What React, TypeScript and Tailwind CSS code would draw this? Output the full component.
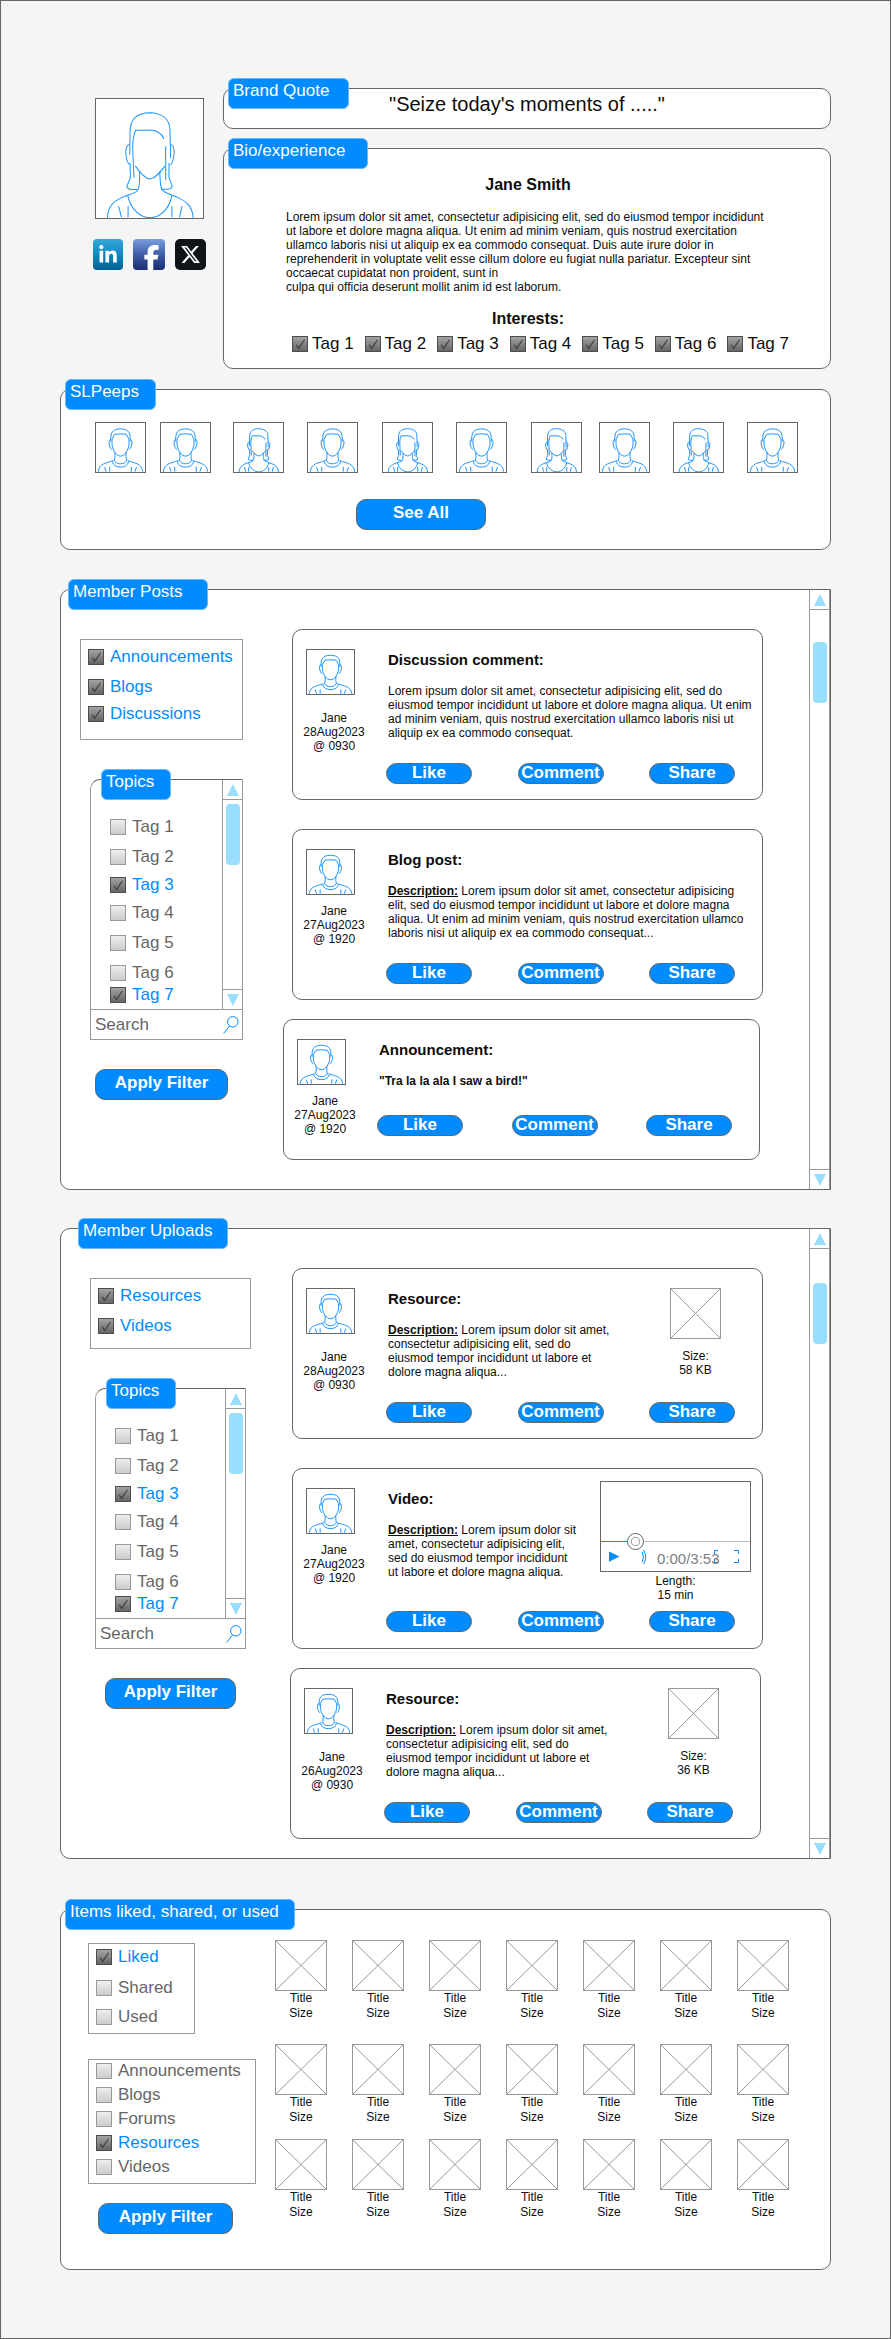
import type { ReactNode } from "react";
import { FaFacebookF, FaLinkedinIn, FaXTwitter } from "react-icons/fa6";

function Tab({ children, className }: { children: ReactNode; className: string }) {
  return (
    <h2
      className={`absolute -top-[11px] z-10 h-[31px] whitespace-nowrap rounded-[6px] border border-[#66b8ff] bg-[#008cff] pt-[2px] pl-[4px] text-[17px] leading-[20px] text-white ${className}`}
    >
      {children}
    </h2>
  );
}

function Check({
  label,
  checked = false,
  tone = "text-[#008cff]",
  gap = "gap-[6px]",
  className = "",
}: {
  label: string;
  checked?: boolean;
  tone?: string;
  gap?: string;
  className?: string;
}) {
  return (
    <label
      className={`flex h-[16px] items-center whitespace-nowrap text-[17px] leading-[16px] ${gap} ${
        checked ? tone : "text-[#666666]"
      } ${className}`}
    >
      <span className="grid size-[16px] shrink-0">
        <input
          type="checkbox"
          defaultChecked={checked}
          className="peer col-start-1 row-start-1 size-[16px] appearance-none border border-[#999999] bg-linear-to-b from-[#eeeeee] to-[#cccccc] checked:border-[#4d4d4d] checked:from-[#a3a3a3] checked:to-[#666666]"
        />
        <svg
          viewBox="0 0 16 16"
          className="pointer-events-none invisible col-start-1 row-start-1 size-[16px] peer-checked:visible"
          fill="none"
          stroke="#3d3d3d"
          strokeWidth="1.1"
        >
          <path d="M4.2 8.8 L6.6 12.4 L12.6 3.8" />
        </svg>
      </span>
      {label}
    </label>
  );
}

function PrimaryButton({ children, className }: { children: ReactNode; className: string }) {
  return (
    <button
      type="button"
      className={`block rounded-[10px] border border-[#666666] bg-[#008cff] pt-[3px] pb-[6px] text-center text-[17px] leading-[20px] font-bold text-white ${className}`}
    >
      {children}
    </button>
  );
}

function Man() {
  return (
    <svg
      viewBox="0 0 150 151"
      preserveAspectRatio="none"
      className="block size-full"
      fill="none"
      stroke="#1a94ff"
      strokeWidth="1"
    >
      <path vectorEffect="non-scaling-stroke" d="M45 57 C44 32 48 19 75 18 C102 19 106 32 105 57" />
      <path vectorEffect="non-scaling-stroke" d="M49 66 V50 L57 35 Q75 32 93 35 L101 50 V66" />
      <path vectorEffect="non-scaling-stroke" d="M46 50 C37 50 38 72 48 82 M104 50 C113 50 112 72 102 82" />
      <path vectorEffect="non-scaling-stroke" d="M49 66 C52 86 62 102 75 102 C88 102 98 86 101 66" />
      <path vectorEffect="non-scaling-stroke" d="M58 90 C58 104 59 112 54 116 M92 90 C92 104 91 112 96 116" />
      <path vectorEffect="non-scaling-stroke" d="M56 113 C58 130 92 130 94 113" />
      <path vectorEffect="non-scaling-stroke" d="M50 118 C52 142 98 142 100 118" />
      <path vectorEffect="non-scaling-stroke" d="M7 150 C10 124 32 124 52 116 M143 150 C140 124 118 124 98 116" />
      <path vectorEffect="non-scaling-stroke" d="M26 136 L31 150 M42 135 V150 M108 135 V150 M124 136 L119 150" />
    </svg>
  );
}

function Woman() {
  return (
    <svg
      viewBox="0 0 327 363"
      preserveAspectRatio="none"
      className="block size-full"
      fill="none"
      stroke="#1a94ff"
      strokeWidth="1"
    >
      <path vectorEffect="non-scaling-stroke" d="M103 170 L104 102 C104 55 130 43 164 42 C198 43 224 58 226 92 L228 180" />
      <path vectorEffect="non-scaling-stroke" d="M116 240 L112 150 C112 125 115 110 121 95 H160 C185 94 200 105 208 122" />
      <path vectorEffect="non-scaling-stroke" d="M213 144 V248" />
      <path vectorEffect="non-scaling-stroke" d="M103 139 C92 140 88 160 93 180 C95 190 98 196 102 200 M227 139 C238 140 242 160 237 180 C235 190 232 196 228 202" />
      <path vectorEffect="non-scaling-stroke" d="M104 195 L105 240 L94 267 Q98 276 108 276 H128 M223 195 V240 L233 266 Q230 275 220 275 H198" />
      <path vectorEffect="non-scaling-stroke" d="M120 204 C135 225 150 244 165 244 C180 244 195 225 211 204" />
      <path vectorEffect="non-scaling-stroke" d="M133 222 C134 250 134 272 126 280 C118 290 100 290 80 300 C55 312 36 325 35 363" />
      <path vectorEffect="non-scaling-stroke" d="M195 222 C196 260 197 275 208 282 C225 292 240 295 255 303 C280 315 295 330 297 363" />
      <path vectorEffect="non-scaling-stroke" d="M97 294 C105 335 135 362 165 362 C195 362 225 335 232 294" />
      <path vectorEffect="non-scaling-stroke" d="M69 327 L78 361 M98 327 V361 M232 327 V361 M263 327 L255 361" />
    </svg>
  );
}

function Avatar({ who, className }: { who: "man" | "woman"; className: string }) {
  return (
    <div className={`border border-[#666666] bg-white ${className}`}>{who === "man" ? <Man /> : <Woman />}</div>
  );
}

function Placeholder({ className }: { className: string }) {
  return (
    <div className={`border border-[#999999] ${className}`}>
      <svg viewBox="0 0 50 50" preserveAspectRatio="none" className="block size-full" stroke="#999999">
        <path vectorEffect="non-scaling-stroke" d="M0 0 L50 50 M50 0 L0 50" />
      </svg>
    </div>
  );
}

function Scrollbar({ thumb }: { thumb: string }) {
  return (
    <div className="flex w-[21px] shrink-0 flex-col border-x border-[#999999] bg-white">
      <div className="flex h-[20px] items-center justify-center border-b border-[#999999]">
        <svg viewBox="0 0 12 12" className="size-[12px]" fill="#99ddff">
          <path d="M6 0 L12 12 H0 Z" />
        </svg>
      </div>
      <div className="flex-1">
        <div className={`mx-auto h-[61px] w-[14px] rounded-[4px] bg-[#99ddff] ${thumb}`} />
      </div>
      <div className="flex h-[20px] items-center justify-center border-t border-[#999999]">
        <svg viewBox="0 0 12 12" className="size-[12px]" fill="#99ddff">
          <path d="M0 0 H12 L6 12 Z" />
        </svg>
      </div>
    </div>
  );
}

const topicTags = [
  { label: "Tag 1", checked: false, space: "" },
  { label: "Tag 2", checked: false, space: "mt-[14px]" },
  { label: "Tag 3", checked: true, space: "mt-[12px]" },
  { label: "Tag 4", checked: false, space: "mt-[12px]" },
  { label: "Tag 5", checked: false, space: "mt-[14px]" },
  { label: "Tag 6", checked: false, space: "mt-[14px]" },
  { label: "Tag 7", checked: true, space: "mt-[6px]" },
];

function Topics({ className }: { className: string }) {
  return (
    <div className={`relative mt-[39px] rounded-tl-[10px] border border-[#999999] border-t-[#666666] ${className}`}>
      <Tab className="left-[10px] w-[70px]">Topics</Tab>
      <div className="flex h-[229px]">
        <div className="flex-1 pt-[39px] pl-[19px]">
          {topicTags.map((t) => (
            <Check key={t.label} label={t.label} checked={t.checked} className={t.space} />
          ))}
        </div>
        <div className="-mr-px flex">
          <Scrollbar thumb="mt-[4px]" />
        </div>
      </div>
      <div className="flex h-[30px] items-center border-t border-[#999999] pr-[3px] pl-[4px]">
        <input
          type="text"
          aria-label="Search topics"
          placeholder="Search"
          className="w-full min-w-0 flex-1 bg-transparent text-[17px] leading-[20px] outline-none placeholder:text-[#666666] placeholder:opacity-100"
        />
        <svg viewBox="0 0 16 18" className="h-[18px] w-[16px] shrink-0" fill="none" stroke="#008cff">
          <circle cx="9.8" cy="5.8" r="5.2" />
          <path d="M6.5 10 L0.6 17.4" />
        </svg>
      </div>
    </div>
  );
}

function Card({
  title,
  date,
  time,
  dateSpace,
  media,
  shape,
  textWidth = "",
  children,
}: {
  title: string;
  date: string;
  time: string;
  dateSpace: string;
  media?: ReactNode;
  shape: string;
  textWidth?: string;
  children: ReactNode;
}) {
  return (
    <article className={`flex rounded-[10px] border border-[#666666] bg-white ${shape}`}>
      <div className="w-[82px] shrink-0 pt-[19px]">
        <Avatar who="man" className="ml-[13px] h-[46px] w-[49px]" />
        <p className={`text-center text-[12px] leading-[14px] ${dateSpace}`}>
          Jane
          <br />
          {date}
          <br />
          {time}
        </p>
      </div>
      <div className="flex min-w-0 flex-1 flex-col pl-[11px]">
        <div className="flex items-start justify-between">
          <div className={`pt-[21px] pr-[9px] pl-[2px] ${textWidth}`}>
            <h3 className="text-[15px] leading-[18px] font-bold">{title}</h3>
            <p className="mt-[15px] text-[12px] leading-[14px]">{children}</p>
          </div>
          {media}
        </div>
        <div className="mt-auto flex justify-between pr-[27px]">
          {["Like", "Comment", "Share"].map((name) => (
            <button
              key={name}
              type="button"
              className="flex h-[21px] w-[86px] justify-center rounded-full border border-[#666666] bg-[#008cff] pt-[1px] pb-[2px] text-[17px] leading-[16px] font-bold text-white"
            >
              {name}
            </button>
          ))}
        </div>
      </div>
    </article>
  );
}

function Description() {
  return <b className="underline">Description:</b>;
}

function FileMedia({ size }: { size: string }) {
  return (
    <figure className="mt-[19px] mr-[41px] w-[51px] shrink-0">
      <Placeholder className="h-[51px]" />
      <figcaption className="mt-[10px] text-center text-[12px] leading-[14px]">
        Size:
        <br />
        {size}
      </figcaption>
    </figure>
  );
}

function VideoMedia() {
  return (
    <figure className="mt-[12px] mr-[11px] w-[151px] shrink-0">
      <div className="relative h-[91px] border border-[#666666]">
        <svg viewBox="0 0 149 89" className="block size-full" fill="none">
          <path d="M0 59.5 H27" stroke="#008cff" />
          <path d="M43 59.5 H149" stroke="#bbbbbb" />
          <circle cx="34.5" cy="59.5" r="8" stroke="#666666" fill="#ffffff" />
          <circle cx="34.5" cy="59.5" r="4.2" stroke="#999999" />
          <path d="M8 69.5 L18.5 74.5 L8 79.8 Z" fill="#008cff" />
          <path d="M41 70 Q44 75 41 80 M42.5 68 Q47 75 42.5 82" stroke="#008cff" />
          <path
            d="M117 68.5 H113.5 V72 M113.5 77 V80.5 H117 M133 68.5 H137.5 V72 M137.5 77 V80.5 H133"
            stroke="#008cff"
          />
        </svg>
        <span className="absolute bottom-[3px] left-[56px] text-[15px] leading-[18px] text-[#808080]">0:00/3:53</span>
      </div>
      <figcaption className="mt-[2px] text-center text-[12px] leading-[14px]">
        Length:
        <br />
        15 min
      </figcaption>
    </figure>
  );
}

const peeps: ("man" | "woman")[] = ["man", "man", "woman", "man", "woman", "man", "woman", "man", "woman", "man"];
const interests = ["Tag 1", "Tag 2", "Tag 3", "Tag 4", "Tag 5", "Tag 6", "Tag 7"];
const itemRows = ["", "mt-[23px]", "mt-[14px]"];
const itemColumns = [1, 2, 3, 4, 5, 6, 7];

export default function App() {
  return (
    <main className="border border-[#666666] bg-[#f5f5f5] px-[59px] pt-[87px] pb-[68px] font-['Liberation_Sans',Arial,sans-serif] text-[#0d0d0d]">
      <header className="flex">
        <div className="w-[163px] shrink-0 pt-[10px]">
          <Avatar who="woman" className="ml-[35px] h-[121px] w-[109px]" />
          <nav className="mt-[20px] ml-[33px] flex gap-[10px]">
            <a
              href="#linkedin"
              aria-label="LinkedIn"
              className="flex h-[31px] w-[30px] items-center justify-center rounded-[4px] bg-linear-to-b from-[#33a8dc] via-[#1089c0] to-[#00618f] text-white"
            >
              <FaLinkedinIn className="size-[20px]" />
            </a>
            <a
              href="#facebook"
              aria-label="Facebook"
              className="flex h-[31px] w-[32px] items-end justify-center rounded-[4px] bg-linear-to-b from-[#7d9fe0] via-[#3f5da8] to-[#1c2c72] pl-[5px] text-white"
            >
              <FaFacebookF className="size-[25px]" />
            </a>
            <a
              href="#x"
              aria-label="X"
              className="flex size-[31px] items-center justify-center rounded-[5px] bg-[#0f1419] text-white"
            >
              <FaXTwitter className="size-[21px]" />
            </a>
          </nav>
        </div>
        <div className="min-w-0 flex-1">
          <section className="relative rounded-[10px] border border-[#666666] bg-white pt-[3px] pb-[12px]">
            <Tab className="left-[4px] w-[121px]">Brand Quote</Tab>
            <p className="text-center text-[20px] leading-[24px]">"Seize today's moments of ....."</p>
          </section>
          <section className="relative mt-[19px] rounded-[10px] border border-[#666666] bg-white pt-[26px] pb-[16px]">
            <Tab className="left-[4px] w-[140px]">Bio/experience</Tab>
            <h1 className="pl-[2px] text-center text-[16px] leading-[20px] font-bold">Jane Smith</h1>
            <p className="mt-[15px] pr-[60px] pl-[62px] text-[12px] leading-[14px]">
              Lorem ipsum dolor sit amet, consectetur adipisicing elit, sed do eiusmod tempor incididunt ut labore et
              dolore magna aliqua. Ut enim ad minim veniam, quis nostrud exercitation ullamco laboris nisi ut aliquip
              ex ea commodo consequat. Duis aute irure dolor in reprehenderit in voluptate velit esse cillum dolore eu
              fugiat nulla pariatur. Excepteur sint occaecat cupidatat non proident, sunt in
              <br />
              culpa qui officia deserunt mollit anim id est laborum.
            </p>
            <h3 className="mt-[15px] pl-[2px] text-center text-[16px] leading-[20px] font-bold">Interests:</h3>
            <div className="mt-[7px] flex justify-between pr-[41px] pl-[68px]">
              {interests.map((t) => (
                <Check key={t} label={t} checked tone="text-[#0d0d0d]" gap="gap-[4px]" />
              ))}
            </div>
          </section>
        </div>
      </header>

      <section className="relative mt-[20px] rounded-[10px] border border-[#666666] bg-white pt-[32px] pb-[19px]">
        <Tab className="left-[4px] w-[91px]">SLPeeps</Tab>
        <div className="mr-[32px] ml-[34px] grid grid-cols-[65fr_73fr_74fr_75fr_74fr_75fr_68fr_74fr_74fr_51fr]">
          {peeps.map((who, i) => (
            <Avatar key={i} who={who} className="size-[51px]" />
          ))}
        </div>
        <PrimaryButton className="mt-[26px] ml-[295px] w-[130px]">See All</PrimaryButton>
      </section>

      <section className="relative mt-[39px] flex min-h-[601px] rounded-l-[10px] border border-[#666666] bg-white">
        <Tab className="left-[7px] w-[140px]">Member Posts</Tab>
        <aside className="w-[222px] shrink-0 pt-[49px]">
          <div className="ml-[19px] h-[101px] w-[163px] border border-[#999999] pt-[9px] pl-[7px]">
            <Check label="Announcements" checked />
            <Check label="Blogs" checked className="mt-[14px]" />
            <Check label="Discussions" checked className="mt-[11px]" />
          </div>
          <Topics className="ml-[29px] w-[153px]" />
          <PrimaryButton className="mt-[29px] ml-[34px] w-[133px]">Apply Filter</PrimaryButton>
        </aside>
        <div className="mr-[46px] min-w-0 flex-1 pt-[39px]">
          <Card
            title="Discussion comment:"
            date="28Aug2023"
            time="@ 0930"
            dateSpace="mt-[16px]"
            shape="ml-[9px] min-h-[171px] pb-[15px]"
          >
            Lorem ipsum dolor sit amet, consectetur adipisicing elit, sed do eiusmod tempor incididunt ut labore et
            dolore magna aliqua. Ut enim ad minim veniam, quis nostrud exercitation ullamco laboris nisi ut aliquip ex
            ea commodo consequat.
          </Card>
          <Card
            title="Blog post:"
            date="27Aug2023"
            time="@ 1920"
            dateSpace="mt-[9px]"
            shape="mt-[29px] ml-[9px] min-h-[171px] pb-[15px]"
          >
            <Description /> Lorem ipsum dolor sit amet, consectetur adipisicing elit, sed do eiusmod tempor incididunt
            ut labore et dolore magna aliqua. Ut enim ad minim veniam, quis nostrud exercitation ullamco laboris nisi
            ut aliquip ex ea commodo consequat...
          </Card>
          <Card
            title="Announcement:"
            date="27Aug2023"
            time="@ 1920"
            dateSpace="mt-[9px]"
            shape="mt-[19px] mr-[3px] min-h-[141px] pb-[23px]"
          >
            <b>"Tra la la ala I saw a bird!"</b>
          </Card>
        </div>
        <Scrollbar thumb="mt-[32px]" />
      </section>

      <section className="relative mt-[38px] flex min-h-[631px] rounded-l-[10px] border border-[#666666] bg-white">
        <Tab className="left-[17px] w-[150px]">Member Uploads</Tab>
        <aside className="w-[229px] shrink-0 pt-[49px]">
          <div className="ml-[29px] h-[71px] w-[161px] border border-[#999999] pt-[9px] pl-[7px]">
            <Check label="Resources" checked />
            <Check label="Videos" checked className="mt-[14px]" />
          </div>
          <Topics className="ml-[34px] w-[151px]" />
          <PrimaryButton className="mt-[29px] ml-[44px] w-[131px]">Apply Filter</PrimaryButton>
        </aside>
        <div className="mr-[46px] min-w-0 flex-1 pt-[39px]">
          <Card
            title="Resource:"
            date="28Aug2023"
            time="@ 0930"
            dateSpace="mt-[16px]"
            shape="ml-[2px] min-h-[171px] pb-[15px]"
            textWidth="w-[238px]"
            media={<FileMedia size="58 KB" />}
          >
            <Description /> Lorem ipsum dolor sit amet, consectetur adipisicing elit, sed do eiusmod tempor incididunt
            ut labore et dolore magna aliqua...
          </Card>
          <Card
            title="Video:"
            date="27Aug2023"
            time="@ 1920"
            dateSpace="mt-[9px]"
            shape="mt-[29px] ml-[2px] min-h-[181px] pb-[16px]"
            textWidth="w-[201px]"
            media={<VideoMedia />}
          >
            <Description /> Lorem ipsum dolor sit amet, consectetur adipisicing elit, sed do eiusmod tempor incididunt
            ut labore et dolore magna aliqua.
          </Card>
          <Card
            title="Resource:"
            date="26Aug2023"
            time="@ 0930"
            dateSpace="mt-[16px]"
            shape="mt-[19px] mr-[2px] min-h-[171px] pb-[15px]"
            textWidth="w-[238px]"
            media={<FileMedia size="36 KB" />}
          >
            <Description /> Lorem ipsum dolor sit amet, consectetur adipisicing elit, sed do eiusmod tempor incididunt
            ut labore et dolore magna aliqua...
          </Card>
        </div>
        <Scrollbar thumb="mt-[34px]" />
      </section>

      <section className="relative mt-[50px] flex min-h-[361px] rounded-[10px] border border-[#666666] bg-white">
        <Tab className="left-[4px] w-[230px]">Items liked, shared, or used</Tab>
        <aside className="w-[214px] shrink-0 pt-[33px]">
          <div className="ml-[27px] h-[91px] w-[107px] border border-[#999999] pt-[5px] pl-[7px]">
            <Check label="Liked" checked />
            <Check label="Shared" className="mt-[15px]" />
            <Check label="Used" className="mt-[13px]" />
          </div>
          <div className="mt-[25px] ml-[27px] flex h-[125px] w-[168px] flex-col gap-[8px] border border-[#999999] pt-[3px] pl-[7px]">
            <Check label="Announcements" />
            <Check label="Blogs" />
            <Check label="Forums" />
            <Check label="Resources" checked />
            <Check label="Videos" />
          </div>
          <PrimaryButton className="mt-[19px] ml-[37px] w-[135px]">Apply Filter</PrimaryButton>
        </aside>
        <div className="mr-[16px] flex-1 pt-[30px]">
          {itemRows.map((space, r) => (
            <div key={r} className={`grid grid-cols-7 ${space}`}>
              {itemColumns.map((c) => (
                <figure key={c} className="w-[52px]">
                  <Placeholder className="h-[51px]" />
                  <figcaption className="text-center text-[12px] leading-[15px]">
                    Title
                    <br />
                    Size
                  </figcaption>
                </figure>
              ))}
            </div>
          ))}
        </div>
      </section>
    </main>
  );
}
